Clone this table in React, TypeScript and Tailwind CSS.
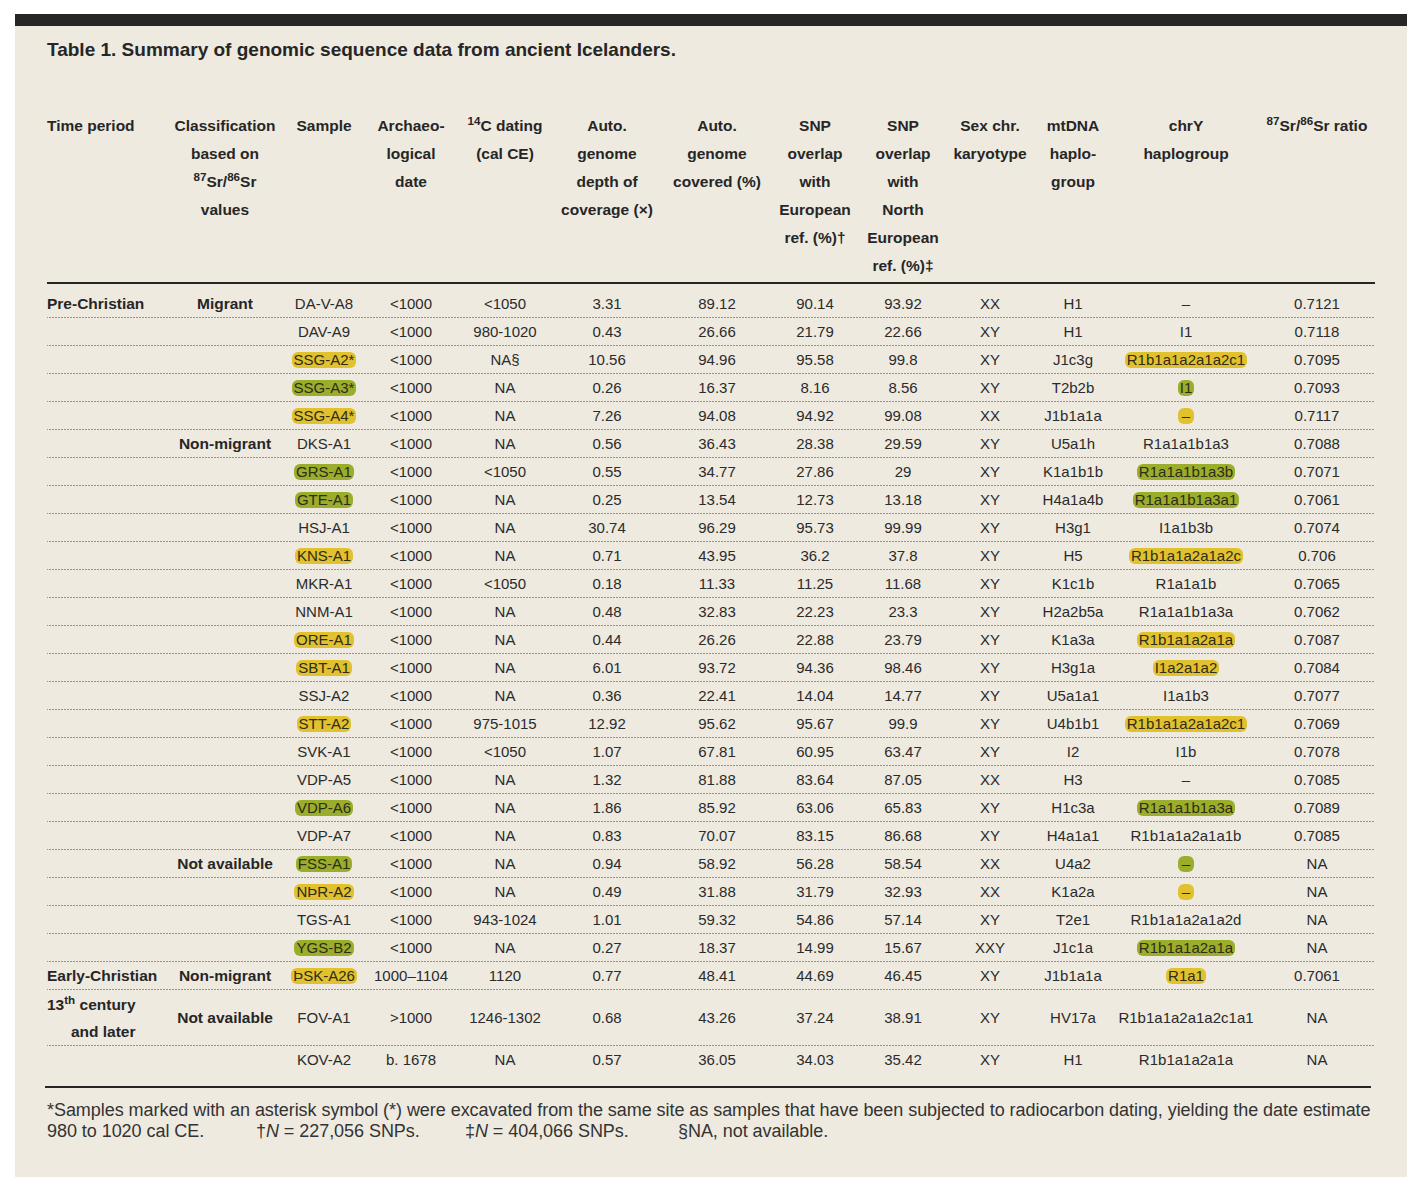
import React from "react";

type Hl = "y" | "g" | undefined;

type Row = {
  period?: React.ReactNode;
  cls?: string;
  sample: string;
  sh?: Hl;
  cells: string[]; // arch, c14, depth, cov, snp1, snp2, sex, mt
  chrY: string;
  yh?: Hl;
  sr: string;
  tall?: boolean;
};

const cols =
  "grid grid-cols-[118px_120px_78px_96px_92px_112px_108px_88px_88px_86px_80px_146px_116px]";

const dotted =
  "bg-[linear-gradient(to_right,#3a3a3a_1px,transparent_1px)] bg-[length:3px_1px] bg-repeat-x bg-bottom";

const rows: Row[] = [
  { period: "Pre-Christian", cls: "Migrant", sample: "DA-V-A8", cells: ["<1000", "<1050", "3.31", "89.12", "90.14", "93.92", "XX", "H1"], chrY: "–", sr: "0.7121" },
  { sample: "DAV-A9", cells: ["<1000", "980-1020", "0.43", "26.66", "21.79", "22.66", "XY", "H1"], chrY: "I1", sr: "0.7118" },
  { sample: "SSG-A2*", sh: "y", cells: ["<1000", "NA§", "10.56", "94.96", "95.58", "99.8", "XY", "J1c3g"], chrY: "R1b1a1a2a1a2c1", yh: "y", sr: "0.7095" },
  { sample: "SSG-A3*", sh: "g", cells: ["<1000", "NA", "0.26", "16.37", "8.16", "8.56", "XY", "T2b2b"], chrY: "I1", yh: "g", sr: "0.7093" },
  { sample: "SSG-A4*", sh: "y", cells: ["<1000", "NA", "7.26", "94.08", "94.92", "99.08", "XX", "J1b1a1a"], chrY: "–", yh: "y", sr: "0.7117" },
  { cls: "Non-migrant", sample: "DKS-A1", cells: ["<1000", "NA", "0.56", "36.43", "28.38", "29.59", "XY", "U5a1h"], chrY: "R1a1a1b1a3", sr: "0.7088" },
  { sample: "GRS-A1", sh: "g", cells: ["<1000", "<1050", "0.55", "34.77", "27.86", "29", "XY", "K1a1b1b"], chrY: "R1a1a1b1a3b", yh: "g", sr: "0.7071" },
  { sample: "GTE-A1", sh: "g", cells: ["<1000", "NA", "0.25", "13.54", "12.73", "13.18", "XY", "H4a1a4b"], chrY: "R1a1a1b1a3a1", yh: "g", sr: "0.7061" },
  { sample: "HSJ-A1", cells: ["<1000", "NA", "30.74", "96.29", "95.73", "99.99", "XY", "H3g1"], chrY: "I1a1b3b", sr: "0.7074" },
  { sample: "KNS-A1", sh: "y", cells: ["<1000", "NA", "0.71", "43.95", "36.2", "37.8", "XY", "H5"], chrY: "R1b1a1a2a1a2c", yh: "y", sr: "0.706" },
  { sample: "MKR-A1", cells: ["<1000", "<1050", "0.18", "11.33", "11.25", "11.68", "XY", "K1c1b"], chrY: "R1a1a1b", sr: "0.7065" },
  { sample: "NNM-A1", cells: ["<1000", "NA", "0.48", "32.83", "22.23", "23.3", "XY", "H2a2b5a"], chrY: "R1a1a1b1a3a", sr: "0.7062" },
  { sample: "ORE-A1", sh: "y", cells: ["<1000", "NA", "0.44", "26.26", "22.88", "23.79", "XY", "K1a3a"], chrY: "R1b1a1a2a1a", yh: "y", sr: "0.7087" },
  { sample: "SBT-A1", sh: "y", cells: ["<1000", "NA", "6.01", "93.72", "94.36", "98.46", "XY", "H3g1a"], chrY: "I1a2a1a2", yh: "y", sr: "0.7084" },
  { sample: "SSJ-A2", cells: ["<1000", "NA", "0.36", "22.41", "14.04", "14.77", "XY", "U5a1a1"], chrY: "I1a1b3", sr: "0.7077" },
  { sample: "STT-A2", sh: "y", cells: ["<1000", "975-1015", "12.92", "95.62", "95.67", "99.9", "XY", "U4b1b1"], chrY: "R1b1a1a2a1a2c1", yh: "y", sr: "0.7069" },
  { sample: "SVK-A1", cells: ["<1000", "<1050", "1.07", "67.81", "60.95", "63.47", "XY", "I2"], chrY: "I1b", sr: "0.7078" },
  { sample: "VDP-A5", cells: ["<1000", "NA", "1.32", "81.88", "83.64", "87.05", "XX", "H3"], chrY: "–", sr: "0.7085" },
  { sample: "VDP-A6", sh: "g", cells: ["<1000", "NA", "1.86", "85.92", "63.06", "65.83", "XY", "H1c3a"], chrY: "R1a1a1b1a3a", yh: "g", sr: "0.7089" },
  { sample: "VDP-A7", cells: ["<1000", "NA", "0.83", "70.07", "83.15", "86.68", "XY", "H4a1a1"], chrY: "R1b1a1a2a1a1b", sr: "0.7085" },
  { cls: "Not available", sample: "FSS-A1", sh: "g", cells: ["<1000", "NA", "0.94", "58.92", "56.28", "58.54", "XX", "U4a2"], chrY: "–", yh: "g", sr: "NA" },
  { sample: "NÞR-A2", sh: "y", cells: ["<1000", "NA", "0.49", "31.88", "31.79", "32.93", "XX", "K1a2a"], chrY: "–", yh: "y", sr: "NA" },
  { sample: "TGS-A1", cells: ["<1000", "943-1024", "1.01", "59.32", "54.86", "57.14", "XY", "T2e1"], chrY: "R1b1a1a2a1a2d", sr: "NA" },
  { sample: "YGS-B2", sh: "g", cells: ["<1000", "NA", "0.27", "18.37", "14.99", "15.67", "XXY", "J1c1a"], chrY: "R1b1a1a2a1a", yh: "g", sr: "NA" },
  { period: "Early-Christian", cls: "Non-migrant", sample: "ÞSK-A26", sh: "y", cells: ["1000–1104", "1120", "0.77", "48.41", "44.69", "46.45", "XY", "J1b1a1a"], chrY: "R1a1", yh: "y", sr: "0.7061" },
  {
    period: (
      <span className="inline-block text-right leading-[27px]">
        13<sup>th</sup> century
        <br />
        and later
      </span>
    ),
    cls: "Not available",
    sample: "FOV-A1",
    cells: [">1000", "1246-1302", "0.68", "43.26", "37.24", "38.91", "XY", "HV17a"],
    chrY: "R1b1a1a2a1a2c1a1",
    sr: "NA",
    tall: true,
  },
  { sample: "KOV-A2", cells: ["b. 1678", "NA", "0.57", "36.05", "34.03", "35.42", "XY", "H1"], chrY: "R1b1a1a2a1a", sr: "NA" },
];

function Pill({ h, children }: { h: Hl; children: React.ReactNode }) {
  if (!h) return <>{children}</>;
  const dash = children === "–";
  return (
    <span
      className={
        (h === "y" ? "bg-[#e2c12f] " : "bg-[#9bae2b] ") +
        (dash ? "px-[4px] " : "px-[2px] ") +
        "inline-block rounded-[6px] leading-[16px] text-[#2f2c18]"
      }
    >
      {children}
    </span>
  );
}

const headers: React.ReactNode[] = [
  <>Time period</>,
  <>
    Classification
    <br />
    based on
    <br />
    <sup>87</sup>Sr/<sup>86</sup>Sr
    <br />
    values
  </>,
  <>Sample</>,
  <>
    Archaeo-
    <br />
    logical
    <br />
    date
  </>,
  <>
    <sup>14</sup>C dating
    <br />
    (cal CE)
  </>,
  <>
    Auto.
    <br />
    genome
    <br />
    depth of
    <br />
    coverage (×)
  </>,
  <>
    Auto.
    <br />
    genome
    <br />
    covered (%)
  </>,
  <>
    SNP
    <br />
    overlap
    <br />
    with
    <br />
    European
    <br />
    ref. (%)†
  </>,
  <>
    SNP
    <br />
    overlap
    <br />
    with
    <br />
    North
    <br />
    European
    <br />
    ref. (%)‡
  </>,
  <>
    Sex chr.
    <br />
    karyotype
  </>,
  <>
    mtDNA
    <br />
    haplo-
    <br />
    group
  </>,
  <>
    chrY
    <br />
    haplogroup
  </>,
  <>
    <sup>87</sup>Sr/<sup>86</sup>Sr ratio
  </>,
];

export default function App() {
  return (
    <div className="min-h-screen bg-white pl-[15px] pt-[14px] font-['Liberation_Sans',Arial,sans-serif] text-[#2b2b2b]">
      <div className="w-[1392px] bg-[#eeeae0]">
        <div className="h-[12px] bg-[#262626]" />
        <div className="px-[32px] pb-[35px] pt-[12px]">
          <h1 className="text-[19px] font-bold leading-[24px] text-[#262626]">
            Table 1. Summary of genomic sequence data from ancient Icelanders.
          </h1>

          {/* header */}
          <div className={cols + " mt-[50px] text-[15.5px] font-bold leading-[28px] text-[#262626]"}>
            {headers.map((h, i) => (
              <div key={i} className={(i === 0 ? "text-left" : "text-center") + " whitespace-nowrap"}>
                {h}
              </div>
            ))}
          </div>
          <div className="mt-[2px] h-[2px] bg-[#262626]" />

          {/* body */}
          <div className="pt-[6px] text-[15px]">
            {rows.map((r, i) => (
              <div
                key={i}
                className={
                  cols +
                  " items-center " +
                  (r.tall ? "h-[56px] " : "h-[28px] ") +
                  (i < rows.length - 1 ? dotted : "")
                }
              >
                <div className="whitespace-nowrap text-[15.5px] font-bold text-[#262626]">{r.period}</div>
                <div className="whitespace-nowrap text-center text-[15.5px] font-bold text-[#262626]">{r.cls}</div>
                <div className="whitespace-nowrap text-center">
                  <Pill h={r.sh}>{r.sample}</Pill>
                </div>
                {r.cells.map((c, j) => (
                  <div key={j} className="whitespace-nowrap text-center">
                    {c}
                  </div>
                ))}
                <div className="whitespace-nowrap text-center">
                  <Pill h={r.yh}>{r.chrY}</Pill>
                </div>
                <div className="whitespace-nowrap text-center">{r.sr}</div>
              </div>
            ))}
          </div>
          <div className="-ml-[2px] mt-[12px] h-[2px] w-[1326px] bg-[#262626]" />

          {/* footnotes */}
          <div className="mt-[12px] text-[18px] leading-[21px] tracking-[-0.05px] text-[#333]">
            <div className="whitespace-nowrap">
              *Samples marked with an asterisk symbol (*) were excavated from the same site as samples that have been
              subjected to radiocarbon dating, yielding the date estimate
            </div>
            <div className="flex whitespace-nowrap">
              <span className="w-[209px]">980 to 1020 cal CE.</span>
              <span className="w-[209px]">
                †<i>N</i> = 227,056 SNPs.
              </span>
              <span className="w-[213px]">
                ‡<i>N</i> = 404,066 SNPs.
              </span>
              <span>§NA, not available.</span>
            </div>
          </div>
        </div>
      </div>
    </div>
  );
}
